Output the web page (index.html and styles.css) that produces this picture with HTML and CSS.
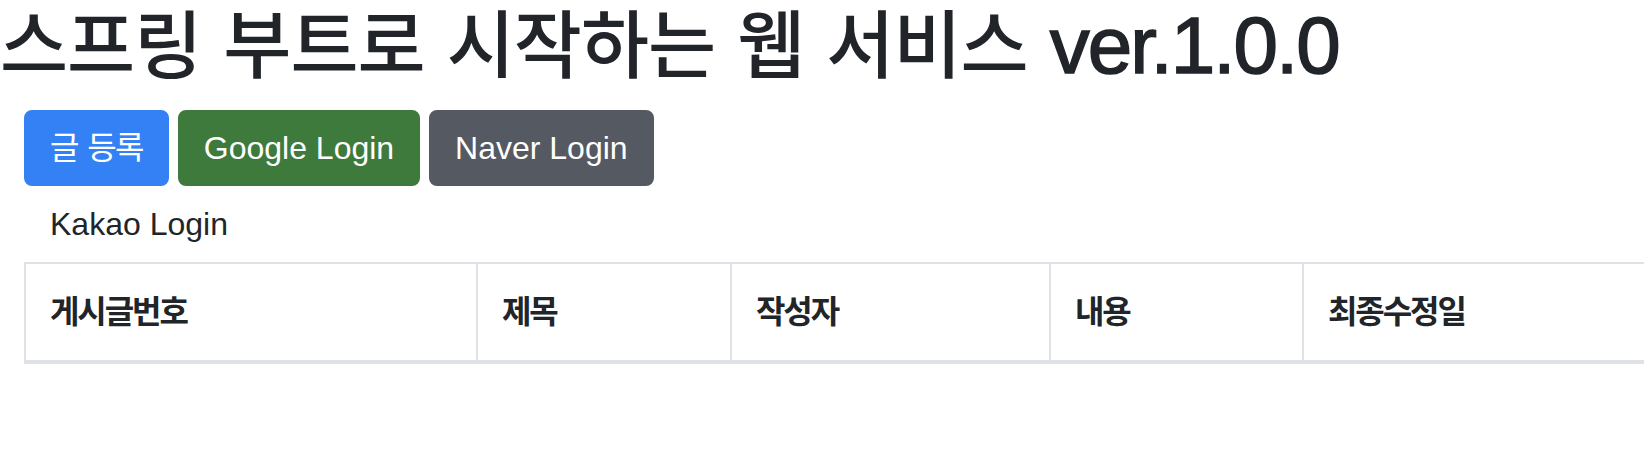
FILE: index.html
```html
<!DOCTYPE html>
<html lang="ko">
<head>
<meta charset="utf-8">
<title>스프링 부트로 시작하는 웹 서비스</title>
<link rel="stylesheet" href="styles.css">
</head>
<body>
<h1 class="title"><span class="ko">스프링 부트로 시작하는 웹 서비스</span> <span class="ver">ver.1.0.0</span></h1>
<div class="actions">
  <a class="btn btn-primary" href="#"><span class="ko">글 등록</span></a>
  <a class="btn btn-success" href="#">Google Login</a>
  <a class="btn btn-secondary" href="#">Naver Login</a>
</div>
<div class="actions">
  <a class="btn btn-plain" href="#">Kakao Login</a>
</div>
<table class="posts">
  <thead>
    <tr>
      <th class="c1"><span class="ko">게시글번호</span></th>
      <th class="c2"><span class="ko">제목</span></th>
      <th class="c3"><span class="ko">작성자</span></th>
      <th class="c4"><span class="ko">내용</span></th>
      <th class="c5"><span class="ko">최종수정일</span></th>
    </tr>
  </thead>
  <tbody></tbody>
</table>
</body>
</html>
```
FILE: styles.css
```css
html, body {
  overflow: hidden;
}
body {
  margin: 0;
  background: #ffffff;
  color: #212529;
  font-family: "Liberation Sans", "Noto Sans CJK KR", sans-serif;
  font-size: 32px;
  line-height: 48px;
}
.ko {
  font-family: "Noto Sans CJK KR", sans-serif;
  letter-spacing: -0.06em;
  line-height: 1;
}
.title {
  margin: -2px 0 16px 0;
  font-size: 80px;
  line-height: 96px;
  font-weight: 500;
  white-space: nowrap;
}
.title .ko {
  font-size: 74px;
  letter-spacing: -1px;
  word-spacing: 2.4px;
  vertical-align: 1px;
}
.ver {
  letter-spacing: -2px;
  -webkit-text-stroke: 1.5px #212529;
}
.actions {
  padding-left: 24px;
  white-space: nowrap;
}
.btn {
  display: inline-block;
  padding: 12px 24px;
  border: 2px solid transparent;
  border-radius: 8px;
  color: #ffffff;
  text-decoration: none;
  font-weight: 400;
  vertical-align: middle;
}
.btn .ko {
  letter-spacing: -0.05em;
  word-spacing: 2px;
}
.btn-primary {
  background: #3481f5;
  border-color: #3481f5;
}
.btn-success {
  background: #3e7a3c;
  border-color: #3e7a3c;
}
.btn-secondary {
  background: #555a62;
  border-color: #555a62;
}
.btn-plain {
  color: #212529;
  background: transparent;
}
.posts {
  margin-left: 24px;
  border-collapse: separate;
  border-spacing: 0;
  table-layout: fixed;
  width: 1680px;
  border-top: 2px solid #dee2e6;
  border-left: 2px solid #dee2e6;
}
.posts th {
  box-sizing: border-box;
  padding: 24px 24px;
  text-align: left;
  font-weight: 700;
  border-right: 2px solid #dee2e6;
  border-bottom: 4px solid #dee2e6;
  vertical-align: bottom;
}
.posts th .ko {
  letter-spacing: -0.065em;
}
.c1 { width: 452px; }
.c2 { width: 254px; }
.c3 { width: 319px; }
.c4 { width: 253px; }
.c5 { width: 400px; }
```
